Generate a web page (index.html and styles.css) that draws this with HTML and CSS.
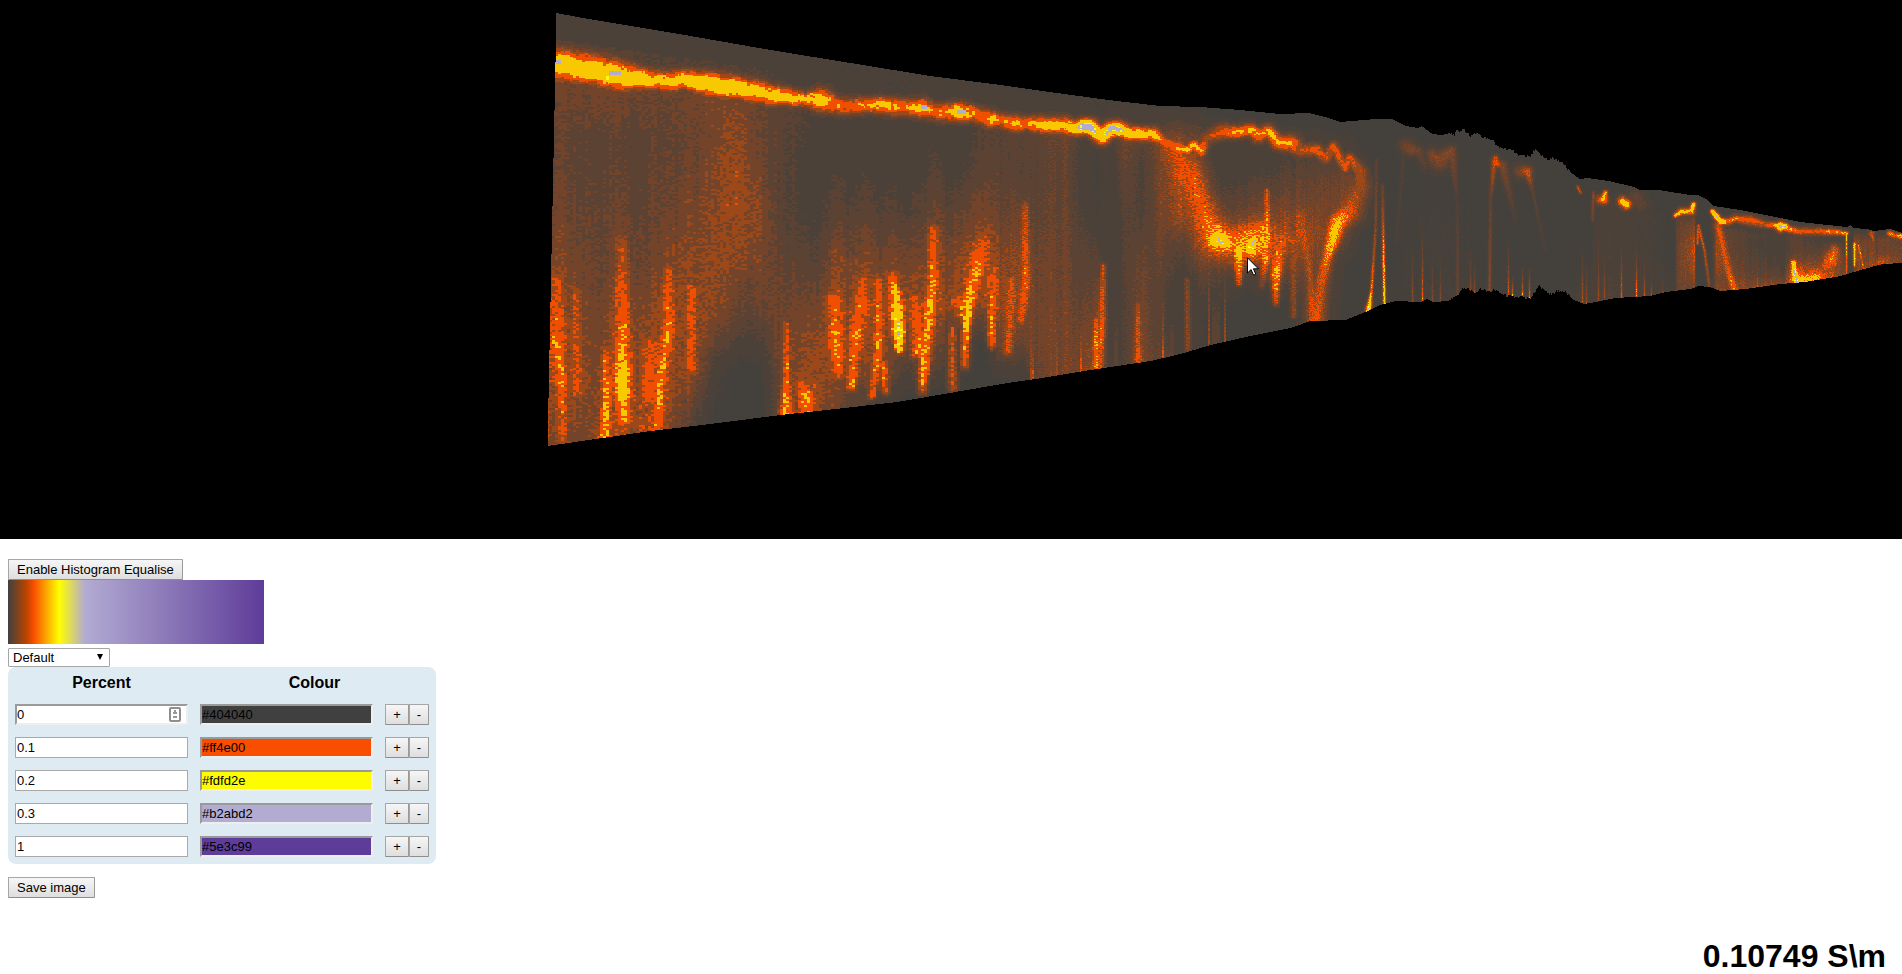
FILE: index.html
```html
<!DOCTYPE html>
<html lang="en">
<head>
<meta charset="utf-8">
<title>Conductivity section</title>
<link rel="stylesheet" href="styles.css">
</head>
<body>
<div class="viewer">
  <canvas class="section" id="section" width="1902" height="539"></canvas>
  <svg class="pointer" viewBox="0 0 12 19" width="12" height="19" aria-hidden="true"><path d="M.5.8V16l3.6-3.4 2.4 5.6 2.3-1-2.4-5.4h5z" fill="#fff" stroke="#000"/></svg>
</div>
<main class="panel">
  <div class="controls">
    <button class="btn" type="button">Enable Histogram Equalise</button>
    <div class="ramp"></div>
    <div class="preset">
      <select class="choice" aria-label="Colour scheme"><option>Default</option></select>
      <svg class="arrow" viewBox="0 0 6 6" width="6" height="6" aria-hidden="true"><path d="M0 0h6L3 6z"/></svg>
    </div>
    <table class="stops">
      <thead><tr><th>Percent</th><th colspan="2">Colour</th></tr></thead>
      <tbody>
        <tr><td class="keyed"><input class="field inset" aria-label="Percent 1" value="0"><svg class="key" viewBox="0 0 12 15" width="12" height="15" aria-hidden="true"><rect x="1" y="1" width="10" height="13" rx="1" fill="#fff" stroke="#8f8f8f" stroke-width="2"/><path d="M5 3h2v2h1v2H4V5h1zM4 9h4v2H4z" fill="#999"/></svg></td><td><input class="field inset grey" aria-label="Colour 1" value="#404040"></td><td class="ops"><button class="btn" type="button">+</button><button class="btn" type="button">-</button></td></tr>
        <tr><td><input class="field" aria-label="Percent 2" value="0.1"></td><td><input class="field inset orange" aria-label="Colour 2" value="#ff4e00"></td><td class="ops"><button class="btn" type="button">+</button><button class="btn" type="button">-</button></td></tr>
        <tr><td><input class="field" aria-label="Percent 3" value="0.2"></td><td><input class="field inset yellow" aria-label="Colour 3" value="#fdfd2e"></td><td class="ops"><button class="btn" type="button">+</button><button class="btn" type="button">-</button></td></tr>
        <tr><td><input class="field" aria-label="Percent 4" value="0.3"></td><td><input class="field inset lilac" aria-label="Colour 4" value="#b2abd2"></td><td class="ops"><button class="btn" type="button">+</button><button class="btn" type="button">-</button></td></tr>
        <tr><td><input class="field" aria-label="Percent 5" value="1"></td><td><input class="field inset purple" aria-label="Colour 5" value="#5e3c99"></td><td class="ops"><button class="btn" type="button">+</button><button class="btn" type="button">-</button></td></tr>
      </tbody>
    </table>
    <button class="btn save" type="button">Save image</button>
  </div>
  <output class="readout">0.10749 S\m</output>
</main>
<script src="section.js"></script>
</body>
</html>
```
FILE: styles.css
```css
body {
  margin: 0;
  min-height: 100vh;
  display: flex;
  flex-direction: column;
  background: #fff;
  color: #000;
  font: 16px/18px "Liberation Sans", Arial, sans-serif;
}
.viewer { position: relative; background: #000; }
.section { display: block; width: 100%; height: auto; }
.pointer { position: absolute; left: 65.56%; top: 47.6%; }
.panel {
  flex: 1;
  display: flex;
  justify-content: space-between;
  padding: 20px 16px 0 8px;
}
.controls { display: flex; flex-direction: column; align-items: flex-start; }
.btn {
  height: 21px;
  padding: 0 8px;
  border: 1px solid;
  border-color: #a6a6a6 #999 #8e8e8e #a6a6a6;
  border-radius: 1px;
  background: linear-gradient(#f6f6f6, #dedede);
  color: #000;
  font: 13px/18px "Liberation Sans", Arial, sans-serif;
}
.ramp {
  width: 256px;
  height: 64px;
  background: linear-gradient(90deg, #404040, #b84400 7%, #f94e00 10%, #ffff00 20%, #b2abd2 30%, #5e3c99);
}
.preset { position: relative; margin-top: 4px; line-height: 0; }
.choice {
  appearance: none;
  width: 102px;
  height: 19px;
  padding: 0 4px;
  border: 1px solid #a6a6a6;
  border-radius: 1px;
  color: #000;
  background: #fff;
  font: 13px/17px "Liberation Sans", Arial, sans-serif;
}
.arrow { position: absolute; right: 7px; top: 6px; pointer-events: none; }
.stops {
  border-spacing: 2px;
  border-radius: 8px;
  background: #deebf3;
}
.stops th, .stops td { padding: 5px; }
.stops td { line-height: 0; }
.field {
  box-sizing: border-box;
  width: 173px;
  height: 21px;
  padding: 0 1px;
  border: 1px solid #a9a9a9;
  background: #fff;
  color: #000;
  font: 13px/17px "Liberation Sans", Arial, sans-serif;
}
.inset {
  padding: 0;
  border: 2px solid;
  border-color: #9a9a9a #eee #eee #9a9a9a;
}
.keyed { position: relative; }
.key { position: absolute; right: 12px; top: 8px; }
.ops { white-space: nowrap; }
.ops .btn { padding: 0; }
.ops .btn:first-child { width: 24px; }
.ops .btn:last-child { width: 20px; }
.grey { background: #404040; }
.orange { background: #f94e00; }
.yellow { background: #fdfd00; }
.lilac { background: #b2abd2; }
.purple { background: #5e3c99; }
.save { margin-top: 13px; }
.readout { align-self: flex-end; font-size: 32px; line-height: 36px; font-weight: bold; }
```
FILE: section.js
```js
const canvas = document.getElementById('section');
const ctx = canvas.getContext('2d');
const W = canvas.width, H = canvas.height;

// Colour per conductivity level
const LEVELS = [[68,64,60],[76,65,57],[92,66,50],[116,68,42],[156,72,24],[240,78,0],[248,200,0],[253,253,20],[178,171,210]];
const LIMITS = [.5, 1.5, 2.5, 3.5, 4.5, 5.7, 7.45, 7.8];

const TOP = [[547,13],[556,13],[577,17],[613,23],[690,36],[770,50],[850,63],[930,76],[1000,85],[1042,91],[1108,100],[1160,106],[1200,107],[1240,110],[1280,114],[1309,113],[1325,117],[1340,122],[1375,119],[1392,119],[1405,126],[1418,128],[1421,126],[1432,134],[1442,135],[1449,133],[1454,136],[1456,130],[1460,132],[1463,128],[1470,137],[1473,135],[1477,132],[1483,138],[1492,139],[1496,145],[1504,149],[1511,150],[1520,156],[1530,156],[1535,148],[1538,153],[1547,160],[1553,158],[1562,163],[1570,172],[1579,179],[1587,178],[1608,181],[1634,187],[1640,190],[1658,190],[1690,195],[1697,195],[1706,199],[1713,206],[1740,210],[1765,215],[1800,222],[1846,227],[1850,225],[1853,228],[1867,229],[1873,231],[1890,229],[1902,233]];
const BOTTOM = [[547,446],[650,431],[710,424],[780,415],[817,411],[897,402],[1007,383],[1035,379],[1090,370],[1150,361],[1180,354],[1210,345],[1250,336],[1290,328],[1310,321],[1345,320],[1365,312],[1380,305],[1395,301],[1420,302],[1426,299],[1433,302],[1448,301],[1458,295],[1462,288],[1467,288],[1474,294],[1480,288],[1486,291],[1496,290],[1503,295],[1515,297],[1530,298],[1537,288],[1539,286],[1546,292],[1551,295],[1556,291],[1565,292],[1573,300],[1584,304],[1600,301],[1615,298],[1650,296],[1665,292],[1690,289],[1698,286],[1709,287],[1720,291],[1745,289],[1780,284],[1805,282],[1840,276],[1860,270],[1882,264],[1902,263]];

// Background level by column, at evenly spaced depths from surface to base
const BASE = [
 [547,.6,3,2.4,3,3.4,4.4,4.4,3.8],[580,.6,3,2.3,2.5,3,3.4,3.6,3.2],[600,.6,3,1.8,2,2.2,2.6,2.9,3.3],
 [622,.6,3.1,2,2.5,3.1,3.8,4.3,4.2],[645,.6,2.6,2,2,2.3,3,3.7,4],[668,.6,2.6,2.4,2.8,3.4,3.9,4.1,3.6],
 [695,.6,2.8,2.5,3,3.5,3.5,3.3,1.2],[715,.7,3,3,3.4,3.5,3.2,.8,0],[740,.7,3,3.7,3.9,3.3,2,.2,0],
 [760,.7,2.6,2.8,3.6,3.3,2.6,.4,0],[778,.7,2,2,2,2.5,2.9,2.6,2.4],[800,.7,1.6,1.3,1.3,2,3,3.7,4.2],
 [818,.7,1,1,1,1.5,2.9,3.7,3.7],[835,.6,.9,1,1.8,3.3,4,3.4,2.6],[880,.6,.9,1,1.8,3,4,3.2,.8],
 [905,.6,.6,.8,1.4,2.8,4,2.2,.2],[935,.6,1,1.5,2.4,3.4,4,2.6,0],[960,.6,.8,.9,2,3.4,3.7,1,0],
 [985,.6,1.5,2,2.9,4.1,3.6,.1,0],[1000,.6,1.7,2,2.6,3.5,4.1,3,.2],[1024,.5,1.9,2,2.8,3.5,4,2.8,.4],
 [1036,.5,2,2,2.3,2.8,2.9,3,2.5],[1065,.5,2.6,2.2,2.4,2.6,2.8,2.8,3],[1082,.5,1.2,1,1.3,1.7,2,2.8,3],
 [1097,.5,.5,.3,.6,1.5,2.4,3.2,3.6],[1112,.5,1,1.1,.8,.6,.6,.6,.6],[1125,.5,2.8,2,1.6,1.6,1.4,1.4,1.4],
 [1142,.5,1.4,1,1.2,2,2.6,2.8,3],[1160,.5,2.4,3,2.8,2.4,1.8,1.8,2],[1180,.3,3.2,4.1,3.9,1.6,.7,.5,.8],
 [1196,.3,3,4.3,4.4,3.4,1.4,.8,.8],[1208,.2,1.4,1,2.8,4.5,2.2,.6,.2],[1222,0,.8,.8,2,4.4,1.6,.2,0],
 [1250,0,.8,1.2,2.6,4.8,1,.1,0],[1275,0,.8,1.5,3.1,4.4,2.4,.2,0],[1292,0,.8,1.8,2.8,3.9,2.4,.4,0],
 [1312,0,1,2,2.8,3.6,3.2,3,2.4],[1345,0,1,2.8,3.3,2.2,.5,.2,0],[1360,0,.4,2,2,.4,.2,0,0],
 [1370,0,.2,.3,.3,.3,.3,.3,.3],[1450,0,.2,.3,.4,.5,.5,.5,.6],[1550,0,0,0,0,0,0,0,0],
 [1588,0,0,0,.2,.3,.4,.6,.8],[1605,0,.5,1,1.2,1.2,1.2,1.3,1.4],[1630,0,.3,.8,.7,.7,.8,.8,.8],
 [1674,0,.2,.3,.3,.3,.3,.4,.6],[1677,0,.5,2,2.6,2.8,2.8,2.8,2.8],[1694,0,.3,3,3.6,4.2,4,3.4,2.6],
 [1696,0,0,0,0,0,0,0,.3],[1710,0,0,0,0,0,0,0,.3],[1716,0,.5,3,3.6,3.8,3.4,2.8,3.2],[1740,0,.4,1.6,1.6,1.8,2.2,2.8,3.6],
 [1784,0,.5,1.2,.8,1,1.2,1.8,3.4],[1790,0,.5,2,1.8,2.6,3.9,5,5.2],[1820,0,.5,1,1.6,2.4,3.4,4.6,5.3],
 [1835,0,.5,1,3,4.2,4.4,3.6,3.9],[1846,0,.6,1,1,1.4,2,2.9,3.4],[1848,0,0,0,0,0,0,0,0],[1852,0,0,0,0,0,0,0,0],
 [1854,0,2,3,3.6,3.8,3.6,3.2,3],[1880,0,1.4,2.6,2.5,2.6,3,4,4.2],[1902,0,2,2.8,2.8,2.8,3,3.2,3.6]];

// Conductive layers as polylines of [x, y, half width, level]
const LAYERS = [
 [[553,63,12,7.2],[590,69,12,7.2],[618,75,12,7.2],[640,78,9,7]],[[640,78,9,6.6],[665,81,8,6.2],[685,79,8,6.8],[710,84,10,7],[740,88,9,7],[775,95,8,6.6],[805,99,6,6.2],[820,99,9,6.7],[833,104,8,5.4],[850,106,7,5.2],[868,104,6,6],[885,105,7,6.3],[905,107,7,5.4],[920,107,7,6.8],[935,112,7,5.2],[960,111,7,7],[975,114,7,5.3],[992,119,7,6.1],[1000,120,6,5.3],[1015,123,7,6.2],[1027,123,6,5.5],[1040,124,7,6.3],[1065,125,7,6.4],[1075,128,6,7]],
 [[1075,128,6,7.3],[1083,126,6,8.6],[1090,126,6,8.6],[1102,137,6,7.2],[1110,129,6,8.4],[1117,128,6,8.3],[1130,133,6,6.8],[1153,134,6,6.3],[1165,142,5,5.2],[1178,148,6,5.4],[1187,150,4,6.2],[1194,144,4,6.2],[1201,152,4,5.8],[1206,138,6,3.8],[1222,131,6,5],[1237,132,5,6],[1251,129,5,5.9],[1258,135,6,5.6],[1268,130,5,5.9],[1279,142,6,5.7],[1292,143,7,5.7],[1300,150,6,4.2],[1316,149,5,5.1],[1325,158,5,4.4],[1333,146,4,5],[1345,168,4,5],[1349,157,4,4.8],[1360,172,6,4.2],[1360,185,7,4]],
 [[553,61,4,8.8],[560,61,3,8.8]],[[610,73,4,8.8],[619,73,4,8.8]],[[604,77,4,7.9],[608,77,4,7.9]],[[922,107,3,8.6],[925,107,3,8.3]],[[957,111,4,8.6],[964,111,3,8.8]],
 [[1603,199,4,6],[1605,192,2,6.2]],[[1622,201,4,6.6],[1626,204,4,6.9]],
 [[1675,215,2,6.6],[1681,211,3,6.2],[1691,211,3,6.2],[1693,204,2,8]],
 [[1712,211,2,7.9],[1720,221,3,7.5],[1728,221,3,5.6],[1735,218,3,5.3],[1750,220,4,5.2],[1765,224,3,4.7],[1776,225,3,5.8],[1780,226,4,8.3],[1784,226,3,8.2],[1787,228,3,6],[1797,231,3,5.2],[1815,231,3,4.9],[1830,231,3,5.5],[1846,233,2,5.9]],[[1846,233,1,6],[1846,276,1,5]]];

// Diffuse plumes, same format; drawn wider with coarse grain
const PLUMES = [
 [[1172,150,12,4.2],[1190,175,12,4.5],[1202,200,9,4.9],[1210,225,11,5.4],[1220,240,12,6.2]],
 [[1216,238,9,6.6],[1226,242,8,6.6]],[[1219,240,3,7.8],[1222,241,3,7.8]],[[1236,246,12,5.3],[1252,246,11,6.4]],[[1250,248,5,7.4],[1254,240,4,7.2]],
 [[1239,250,5,6.8],[1239,283,2,4.8]],[[1232,240,12,5],[1262,232,10,5.3],[1266,260,4,5.6],[1262,285,2,3]],[[1267,190,2,4.6],[1267,246,3,5.9]],
 [[1280,240,6,4.6],[1276,275,4,6.1],[1276,303,2,4.3]],[[1293,240,3,4],[1294,315,2,3.5]],
 [[1360,185,7,3.8],[1350,210,8,4.6],[1337,222,6,6.5],[1332,240,5,6.6],[1327,255,4,5.6],[1320,285,5,4.5],[1315,325,6,4.9]],[[1300,215,6,3.8],[1310,280,3,4],[1313,320,5,4.7]],
 [[1376,160,1,2],[1375,230,1,3.4],[1371,290,1,5.6],[1368,310,2,7.4]],[[1382,185,1,2.4],[1383,250,1,5.8],[1384,305,1,7]],
 [[1396,240,1,1.2],[1403,155,1,1.6],[1405,145,4,2.8],[1410,149,4,3.2],[1418,150,3,2.6],[1425,170,2,1.2],[1430,150,3,1.8],[1432,155,4,3.2],[1439,160,6,3.3],[1451,150,3,3.3],[1457,200,1,1.3],[1457,300,1,2.8]],
 [[1489,290,1,3.8],[1490,200,1,2.2],[1494,160,2,4.7]],[[1495,158,2,4.7],[1496,163,2,5],[1502,165,3,3.2],[1515,220,1,1]],[[1520,171,4,3.2],[1527,171,3,5],[1532,190,1,2.1],[1545,250,1,1]],
 [[1577,186,1,4.3],[1580,192,1,4.3]],[[1593,192,1,3.6],[1592,220,1,2.6]],[[1600,199,3,5.2],[1604,198,2,5.4]],[[1635,197,5,2.3],[1641,205,5,1.8]],
 [[1697,243,1,4.8],[1698,225,1,4.8],[1704,250,1,4.3],[1709,287,1,3.6]],
 [[1718,225,3,4.8],[1724,252,3,4.7],[1729,275,3,5],[1735,292,3,5.3]],[[1793,262,2,7],[1794,272,2,8.2],[1797,282,3,7.8]],[[1798,280,5,6],[1816,277,4,6.1]],[[1834,250,4,4.8],[1831,258,6,5],[1825,265,4,4.6]],
 [[1854,243,1,6.8],[1854,265,1,6]],[[1858,245,1,5.5],[1863,268,1,4.9]],[[1871,233,2,4.7],[1873,240,1,4.2]],[[1889,233,2,5.6],[1894,235,2,4.8],[1902,236,2,6.6]],
 [[555,280,6,4.3],[556,340,8,5],[561,380,5,5],[563,440,3,4.6]],[[575,290,4,4],[577,390,6,4.5]],[[622,240,4,4.1],[622,310,7,4.9],[622,345,7,5.6],[622,372,7,6.6],[622,392,7,6.3],[624,420,5,5.3]],[[605,350,4,4.8],[606,405,4,5.7],[604,438,5,5.9]],[[668,270,4,4.5],[668,330,6,5.3],[660,375,5,5.3],[657,430,5,5.1]],[[650,345,6,4.6],[648,395,6,4.8]],[[692,290,4,4.7],[691,370,5,4.5]],
 [[786,325,3,4.2],[786,380,3,5.5],[786,412,5,6.1]],[[800,385,5,4.6],[806,395,6,5.4],[806,410,6,5.5]],[[833,300,6,4.7],[836,345,7,5.4],[838,372,5,5]],[[862,280,5,4.5],[855,340,6,5.5],[851,385,4,5.4]],[[878,280,4,4.5],[878,350,4,5.6],[872,395,3,5]],[[883,365,4,5.6],[885,390,3,4.8]],
 [[892,275,5,4.8],[896,305,5,6.5],[898,332,5,7.7],[899,350,3,6.6]],[[933,230,5,4.6],[932,285,4,5.6],[927,325,5,5.8],[923,375,4,5.7],[922,390,3,4.8]],[[915,300,5,4.7],[918,350,6,5.4]],
 [[982,245,8,4.5],[970,290,5,6],[968,305,4,6.6],[965,340,3,5.9],[964,365,3,4.8]],[[957,300,6,4.8],[966,318,5,5.4]],[[992,270,4,4.5],[991,330,3,5.7],[992,345,3,4.6]],[[952,330,3,4.7],[952,388,3,4.4]],
 [[1025,205,3,4.3],[1026,285,4,5.1],[1021,320,3,4.6]],[[1012,280,3,4.4],[1008,350,4,4.6]],[[1103,265,2,4.3],[1102,320,3,5.2],[1100,366,3,4.8]],[[1096,320,2,5.2],[1096,367,3,5.4]],[[1138,305,2,4.3],[1138,360,3,5]],[[1187,280,2,3.4],[1188,350,2,3.6]]];

// Thin vertical streaks: [x, start y, level at base]
const STREAKS = [[1031,240,4],[1033,320,4.6],[1052,230,3.6],[1057,290,4],[1081,310,4.8],[1116,260,4],[1152,250,4],[1163,270,4.6],[1172,290,4.4],[1209,240,4],[1214,250,4],[1218,250,4],[1225,265,4.2],[1412,245,4],[1422,225,5.4],[1432,255,3.6],[1440,255,3.6],[1470,250,3.6],[1474,262,4.2],[1508,240,5],[1512,275,6],[1522,265,6],[1529,265,5.6],[1582,245,4.5],[1586,260,4],[1598,225,4],[1604,245,4],[1621,235,5.2],[1636,245,6],[1644,260,4.8],[1651,275,4],[1662,275,3],[1757,265,5],[1771,270,4.6]];

const interp = (pts, x) => {
  let i = 1;
  while (i < pts.length - 1 && pts[i][0] < x) i++;
  const a = pts[i - 1], b = pts[i];
  return a[1] + (b[1] - a[1]) * Math.min(1, (x - a[0]) / (b[0] - a[0]));
};
const hash = (x, y) => {
  let h = Math.imul(x, 374761393) ^ Math.imul(y, 668265263);
  h = Math.imul(h ^ (h >>> 13), 1274126177);
  return ((h ^ (h >>> 16)) >>> 0) / 4294967296;
};

const layer = new Float32Array(W * H), plume = new Float32Array(W * H);
function stroke(pts, field, fall) {
  for (let i = 1; i < pts.length; i++) {
    const [x0, y0, w0, a0] = pts[i - 1], [x1, y1, w1, a1] = pts[i];
    const r = Math.max(w0, w1) * 3, dx = x1 - x0, dy = y1 - y0, len = dx * dx + dy * dy;
    for (let y = Math.floor(Math.min(y0, y1) - r); y <= Math.max(y0, y1) + r; y++) {
      for (let x = Math.max(0, Math.floor(Math.min(x0, x1) - r)); x <= Math.min(W - 1, Math.max(x0, x1) + r); x++) {
        const t = Math.max(0, Math.min(1, ((x - x0) * dx + (y - y0) * dy) / len));
        const d = Math.hypot(x - x0 - t * dx, y - y0 - t * dy) / (w0 + (w1 - w0) * t);
        const v = (a0 + (a1 - a0) * t) * Math.exp(-d * d * fall);
        if (v > field[y * W + x]) field[y * W + x] = v;
      }
    }
  }
}
LAYERS.forEach(p => stroke(p, layer, .4));
PLUMES.forEach(p => stroke(p, plume, .25));
STREAKS.forEach(([x, y, a]) => stroke([[x, y, .7, .8], [x, interp(BOTTOM, x), .8, a]], plume, .4));

const image = ctx.createImageData(W, H);
for (let i = 3; i < image.data.length; i += 4) image.data[i] = 255;
for (let x = 547; x < W; x++) {
  const cw = x < 1000 ? 3 : x < 1300 ? 2 : 1, ch = x < 1000 ? 2 : 1;
  const cx = Math.floor(x / cw), sx = Math.min(W - 1, cx * cw + (cw >> 1));
  const jag = x > 1450 && x < 1570 ? Math.round((hash(x, 3) - .5) * 2) : 0;
  const top = Math.round(interp(TOP, x)) + jag, bottom = Math.round(interp(BOTTOM, x)) + jag;
  let k = 1;
  while (k < BASE.length - 1 && BASE[k][0] < sx) k++;
  const a = BASE[k - 1], b = BASE[k], f = Math.max(0, Math.min(1, (sx - a[0]) / (b[0] - a[0])));
  const grain = hash(cx, 991) - .5, wide = hash(Math.floor(cx / 3), 77) - .5;
  for (let y = top; y < bottom; y++) {
    if (x < 556 - (y - 13) * 9 / 433) continue;
    const cy = Math.floor((y + (x < 1000 ? Math.floor((cx * cw - 547) / 12) % 2 : 0)) / ch);
    const sy = Math.min(H - 1, cy * ch);
    const t = Math.max(0, Math.min(6.999, (sy - top) / (bottom - top) * 7)), n = Math.floor(t) + 1;
    const va = a[n] + (a[n + 1] - a[n]) * (t - n + 1), vb = b[n] + (b[n + 1] - b[n]) * (t - n + 1);
    let base = va + (vb - va) * f;
    // Quiet cover above the conductive layer
    if (x < 1075) {
      const d = 50 - (x - 556) * .028 - (sy - top);
      if (d > 12) base = Math.min(base, .9 + (d < 24 ? .8 : 0) * (1 - (x - 556) / 600));
    }
    base += (grain * .4 + wide * .6) * Math.min(1, base / 2) * Math.min(1, t / 2);
    const p = plume[sy * W + sx], l = layer[sy * W + sx];
    const rough = Math.max(base, p);
    const n1 = hash(cx, cy) - .5;
    // Blotches elongated along the layer give it ragged edges
    const n2 = hash(Math.floor(cx / 2), Math.floor((sy - x * .14) / (x < 1300 ? 3 : 2))) - .5;
    const diffuse = Math.pow(Math.pow(base, 5) + Math.pow(p, 5), .2) + n1 * Math.min(1.6, .2 + rough * .26);
    const sharp = l + n1 * .2 + n2 * Math.min(1, l * .2);
    let v = Math.max(diffuse, sharp);
    if (l < 7.6 && p < 6.5) v = Math.min(v, 7.4);
    let c = 0;
    while (c < 8 && v > LIMITS[c]) c++;
    const o = (y * W + x) * 4;
    image.data[o] = LEVELS[c][0]; image.data[o + 1] = LEVELS[c][1]; image.data[o + 2] = LEVELS[c][2];
  }
}
ctx.putImageData(image, 0, 0);
```
